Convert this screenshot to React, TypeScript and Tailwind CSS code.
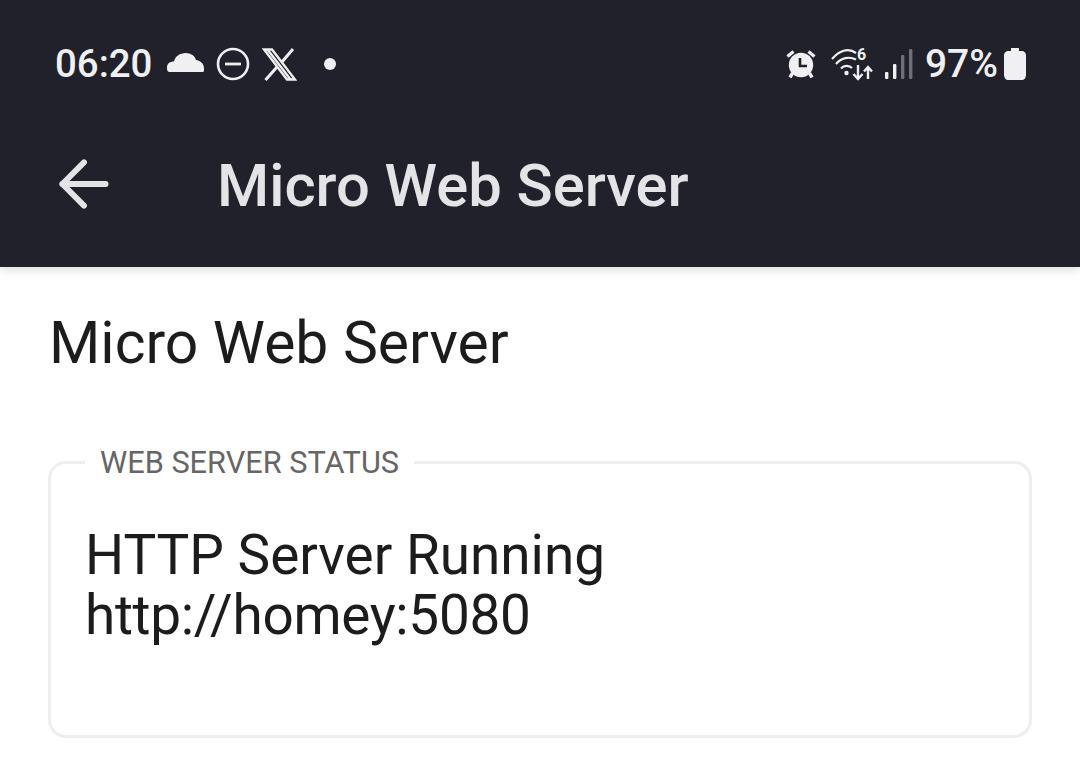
import { ArrowLeft } from "lucide-react";

function Cloud() {
  return (
    <svg width="37" height="21" viewBox="0 0 37 21" fill="#f0f0f2">
      <path d="M3 20 C0 20 0 17.5 0 15.5 C0 11.5 3 9.5 7 9.5 C8 4.5 13 1 18.5 1 C24 1 28 4 29 8 C33.5 8.5 37 12 37 16 L37 18.5 C37 19.5 36 20 35 20 Z" />
    </svg>
  );
}

function Dnd() {
  return (
    <svg width="34" height="34" viewBox="0 0 34 34" fill="none" stroke="#f0f0f2">
      <circle cx="17" cy="17" r="15" strokeWidth="2.6" />
      <line x1="9" y1="17" x2="25" y2="17" strokeWidth="2.8" />
    </svg>
  );
}

function XLogo() {
  return (
    <svg width="35" height="33" viewBox="0 0 35 33" fill="none" stroke="#f0f0f2">
      <path d="M2 1.5 H10 L33 31.5 H25 Z" strokeWidth="2.4" />
      <path d="M5.5 1.5 L28.5 31.5" strokeWidth="2.4" />
      <path d="M31 1 L19.5 14.5 M15 19 L3.5 32" strokeWidth="3" />
    </svg>
  );
}

function Alarm() {
  return (
    <svg width="30" height="30" viewBox="0 0 30 30">
      <circle cx="15" cy="16" r="12.2" fill="#f0f0f2" />
      <path d="M1.5 7.5 L7.5 2.5 M28.5 7.5 L22.5 2.5" stroke="#f0f0f2" strokeWidth="3.2" />
      <path d="M6.5 24 L4 28.5 M23.5 24 L26 28.5" stroke="#f0f0f2" strokeWidth="3.6" />
      <path d="M14 9 V17 H21" fill="none" stroke="#20212b" strokeWidth="2.6" />
    </svg>
  );
}

function WifiData() {
  return (
    <div className="relative w-[44px] h-[34px]">
      <svg width="44" height="34" viewBox="0 0 44 34" fill="none" stroke="#f0f0f2">
        <path d="M1 12 C8 4 17 0 25 6" strokeWidth="2.2" />
        <path d="M5 17 C10 11 18 9 25 12.5" strokeWidth="2.2" />
        <path d="M10 21.5 C13 18 18 18 21 21" strokeWidth="2.2" />
        <circle cx="15.5" cy="26" r="2.2" fill="#f0f0f2" stroke="none" />
        <path d="M27 18 V32 M22.5 27 L27 32 L31.5 27" strokeWidth="2.4" />
        <path d="M37 32 V20 M33 24.5 L37 20 L41 24.5" strokeWidth="2.4" />
      </svg>
      <span className="absolute left-[26px] -top-[1px] text-[16px] leading-[18px] font-bold text-[#f0f0f2]">6</span>
    </div>
  );
}

function Signal() {
  return (
    <svg width="28" height="32" viewBox="0 0 28 32">
      <rect x="0" y="24" width="3.4" height="7" rx="1" fill="#f0f0f2" />
      <rect x="8" y="16" width="3.4" height="15" rx="1" fill="#f0f0f2" />
      <rect x="16" y="7" width="3.4" height="24" rx="1" fill="#6e6f78" />
      <rect x="24" y="1" width="3.4" height="30" rx="1" fill="#6e6f78" />
    </svg>
  );
}

function Battery() {
  return (
    <svg width="22" height="32" viewBox="0 0 22 32" fill="#f0f0f2">
      <path d="M7 0 H15 V3 H18 C20 3 22 5 22 7 V27 C22 30 20 32 18 32 H4 C2 32 0 30 0 27 V7 C0 5 2 3 4 3 H7 Z" />
    </svg>
  );
}

export default function App() {
  return (
    <div className="h-[782px] overflow-hidden bg-white font-['Roboto',sans-serif]">
      <header className="h-[267px] bg-[#20212b] shadow-[0_2px_10px_rgba(0,0,0,0.16)] relative">
        <div className="flex items-center justify-between pt-[44px] pl-[55px] pr-[54px] h-[84px] text-[#f0f0f2]">
          <div className="flex items-center">
            <span className="text-[38.4px] leading-[40px] font-medium w-[112px]">06:20</span>
            <span className="flex mb-[3px]"><Cloud /></span>
            <span className="ml-[12px] flex"><Dnd /></span>
            <span className="ml-[12px] flex"><XLogo /></span>
            <span className="ml-[27px] w-[12px] h-[12px] rounded-full bg-[#f0f0f2]" />
          </div>
          <div className="flex items-center">
            <Alarm />
            <span className="ml-[15px] flex"><WifiData /></span>
            <span className="ml-[10px] flex"><Signal /></span>
            <span className="ml-[12px] text-[39px] leading-[40px] font-medium">97%</span>
            <span className="ml-[6px] flex"><Battery /></span>
          </div>
        </div>
        <div className="flex items-center pl-[47px] mt-[63px]">
          <ArrowLeft size={74} strokeWidth={1.9} color="#e4e4e7" className="mb-[3px]" />
          <h1 className="ml-[96px] text-[59.7px] leading-[66px] font-medium text-[#e4e4e7]">Micro Web Server</h1>
        </div>
      </header>
      <main className="px-[48px]">
        <h2 className="mt-[42px] ml-[1px] text-[58.8px] leading-[68px] text-[#1c1c1c]">Micro Web Server</h2>
        <fieldset className="mt-[68px] h-[293px] rounded-[18px] border-[3px] border-[#eeeeee]">
          <legend className="ml-[34px] px-[15px] pt-[1px] text-[30.7px] leading-[34px] text-[#666666]">WEB SERVER STATUS</legend>
          <p className="mt-[45px] ml-[34px] text-[54.9px] leading-[60px] text-[#1c1c1c]">
            HTTP Server Running
            <br />
            <span className="tracking-[-0.3px]">http://homey:5080</span>
          </p>
        </fieldset>
      </main>
    </div>
  );
}
